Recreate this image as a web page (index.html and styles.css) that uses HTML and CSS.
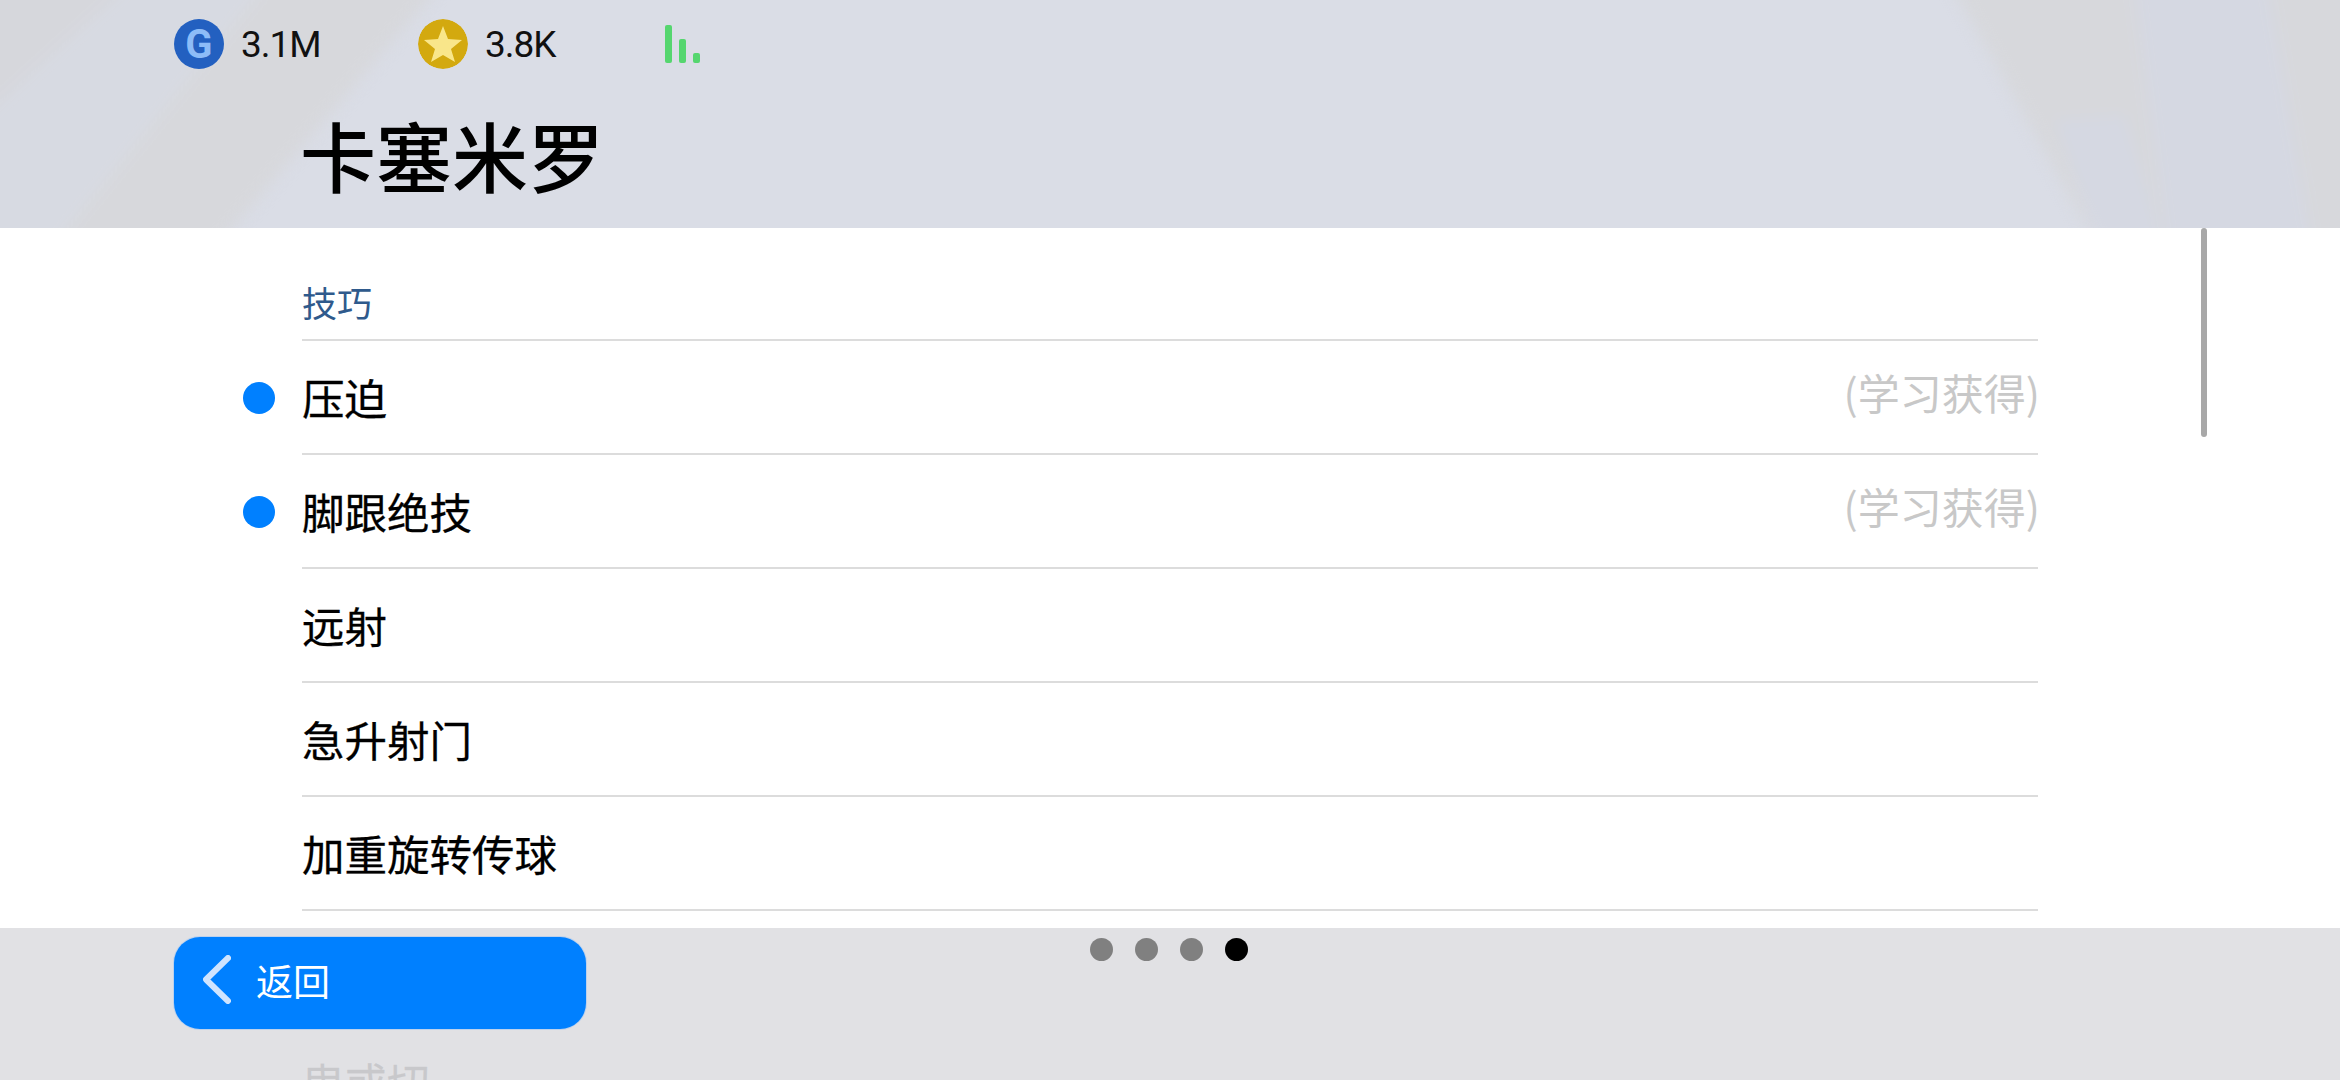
FILE: index.html
```html
<!DOCTYPE html>
<html lang="zh-CN">
<head>
    <meta charset="UTF-8">
    <meta name="viewport" content="width=device-width, initial-scale=1.0">
    <title>卡塞米罗</title>
    <link rel="stylesheet" href="styles.css">
</head>
<body>
    <div class="screen">
        <!-- Header -->
        <header class="header">
            <svg class="header-bg" viewBox="0 0 2340 228" preserveAspectRatio="none" aria-hidden="true">
                <g class="bg-blur">
                    <polygon class="bg-corner" points="-20,-20 135,-20 -20,120"/>
                    <polygon class="bg-soft" points="135,-20 270,-20 50,250 -20,250 -20,120"/>
                    <polygon class="bg-grey" points="270,-20 445,-20 214,250 50,250"/>
                    <polygon class="bg-grey" points="1948,-20 2133,-20 2167,250 2100,250"/>
                    <polygon class="bg-blue" points="2055,120 2125,115 2165,250 2100,250"/>
                    <polygon class="bg-blue" points="2133,-20 2267,-20 2313,250 2167,250"/>
                    <polygon class="bg-grey" points="2267,-20 2360,-20 2360,250 2313,250"/>
                </g>
            </svg>
            <div class="status-bar">
                <div class="stat">
                    <span class="coin coin-g">G</span>
                    <span class="stat-value">3.1M</span>
                </div>
                <div class="stat">
                    <svg class="coin" viewBox="0 0 50 50" aria-hidden="true">
                        <circle cx="25" cy="25" r="25" fill="#d3a90f"/>
                        <polygon points="25,7 30,20 44,21 33,30 37,43 25,36 13,43 17,30 6,21 20,20" fill="#f9e68a"/>
                    </svg>
                    <span class="stat-value">3.8K</span>
                </div>
                <div class="signal">
                    <span class="signal-bar signal-high"></span>
                    <span class="signal-bar signal-mid"></span>
                    <span class="signal-bar signal-low"></span>
                </div>
            </div>
            <h1 class="player-name">卡塞米罗</h1>
        </header>

        <!-- Skill list -->
        <main class="skills">
            <div class="scroll-thumb"></div>
            <h2 class="skills-title">技巧</h2>
            <div class="skill-row">
                <span class="skill-dot"></span>
                <span class="skill-name">压迫</span>
                <span class="skill-note">(学习获得)</span>
            </div>
            <div class="skill-row">
                <span class="skill-dot"></span>
                <span class="skill-name">脚跟绝技</span>
                <span class="skill-note">(学习获得)</span>
            </div>
            <div class="skill-row"><span class="skill-name">远射</span></div>
            <div class="skill-row"><span class="skill-name">急升射门</span></div>
            <div class="skill-row"><span class="skill-name">加重旋转传球</span></div>
            <div class="skill-row skill-row-hidden"></div>
            <div class="skill-row"><span class="skill-name">曳或切</span></div>
        </main>

        <!-- Footer -->
        <footer class="footer">
            <button class="back-button">
                <svg class="back-icon" viewBox="0 0 28 49" aria-hidden="true">
                    <polyline points="25,3 3,24.5 25,46"/>
                </svg>
                返回
            </button>
            <div class="pager">
                <span class="pager-dot"></span>
                <span class="pager-dot"></span>
                <span class="pager-dot"></span>
                <span class="pager-dot active"></span>
            </div>
        </footer>
    </div>
</body>
</html>
```

FILE: styles.css
```css
:root {
    --bg-header: #dadde6;
    --bg-footer: rgba(222, 222, 225, 0.9);
    --text-primary: #000000;
    --text-muted: #c8c8c8;
    --text-title: #2f5a8c;
    --accent: #0080ff;
    --line: #dcdcdc;
    --font-primary: 'Noto Sans CJK SC', sans-serif;
    --font-latin: 'Roboto', 'Noto Sans CJK SC', sans-serif;
}

html,
body {
    margin: 0;
    padding: 0;
}

body {
    font-family: var(--font-primary);
    color: var(--text-primary);
    background-color: #ffffff;
}

.screen {
    position: relative;
    width: 2340px;
    height: 1080px;
    overflow: hidden;
    display: flex;
    flex-direction: column;
}

/* Header */
.header {
    position: relative;
    flex: none;
    height: 228px;
    background-color: var(--bg-header);
    overflow: hidden;
}

.header-bg {
    position: absolute;
    top: 0;
    left: 0;
    width: 100%;
    height: 100%;
}

.bg-blur {
    filter: blur(7px);
}

.bg-corner {
    fill: #d6d7dc;
}

.bg-grey {
    fill: #d7d8dc;
}

.bg-soft {
    fill: #d7dae2;
}

.bg-blue {
    fill: #d5d8e2;
}

.status-bar {
    position: relative;
    display: flex;
    align-items: center;
    height: 88px;
    padding-left: 174px;
}

.stat {
    display: flex;
    align-items: center;
    gap: 17px;
    width: 244px;
    flex: none;
}

.stat + .stat {
    width: 247px;
}

.coin {
    flex: none;
    width: 50px;
    height: 50px;
    border-radius: 50%;
}

.coin-g {
    display: flex;
    align-items: center;
    justify-content: center;
    background-color: #2360c0;
    color: #8dbcf7;
    font-family: var(--font-latin);
    font-size: 40px;
    font-weight: 700;
}

.stat-value {
    font-family: var(--font-latin);
    font-size: 37px;
    letter-spacing: -1px;
    color: #111111;
}

.signal {
    display: flex;
    align-items: flex-end;
    gap: 7px;
    height: 38px;
}

.signal-bar {
    width: 7px;
    background-color: #55d66f;
    border-radius: 2px;
}

.signal-high {
    height: 38px;
}

.signal-mid {
    height: 24px;
}

.signal-low {
    height: 10px;
}

.player-name {
    position: relative;
    margin: 0;
    padding-left: 300px;
    font-size: 76px;
    font-weight: 500;
    line-height: 132px;
}

/* Skill list */
.skills {
    position: relative;
    flex: 1;
    background-color: #ffffff;
    padding: 0 302px;
}

.scroll-thumb {
    position: absolute;
    top: 0;
    left: 2201px;
    width: 6px;
    height: 209px;
    border-radius: 3px;
    background-color: #a8a8a8;
}

.skills-title {
    display: flex;
    align-items: flex-end;
    box-sizing: border-box;
    height: 113px;
    margin: 0;
    padding-bottom: 12px;
    border-bottom: 2px solid var(--line);
    font-size: 35px;
    font-weight: 400;
    line-height: 50px;
    color: var(--text-title);
}

.skill-row {
    display: flex;
    align-items: center;
    box-sizing: border-box;
    height: 114px;
    border-bottom: 2px solid var(--line);
}

.skill-row-hidden {
    border-bottom-color: transparent;
}

.skill-dot {
    flex: none;
    width: 32px;
    height: 32px;
    margin-top: 2px;
    margin-left: -59px;
    margin-right: 27px;
    border-radius: 50%;
    background-color: var(--accent);
}

.skill-name {
    font-size: 42.5px;
    line-height: 60px;
    -webkit-text-stroke: 0.3px #000000;
}

.skill-note {
    margin-left: auto;
    margin-right: -2px;
    margin-bottom: 10px;
    font-size: 42px;
    line-height: 60px;
    color: var(--text-muted);
}

/* Footer */
.footer {
    position: absolute;
    left: 0;
    right: 0;
    bottom: 0;
    display: grid;
    grid-template-columns: 1fr auto 1fr;
    align-items: start;
    box-sizing: border-box;
    height: 152px;
    padding-top: 9px;
    background-color: var(--bg-footer);
}

.back-button {
    display: flex;
    align-items: center;
    gap: 25px;
    box-sizing: border-box;
    width: 412px;
    height: 92px;
    margin-left: 174px;
    padding: 0 0 7px 29px;
    border: none;
    border-radius: 26px;
    background-color: var(--accent);
    box-shadow: 0 0 0 1px rgba(120, 180, 255, 0.35);
    color: #ffffff;
    font-family: var(--font-primary);
    font-size: 37px;
}

.back-icon {
    flex: none;
    width: 28px;
    height: 49px;
    fill: none;
    stroke: #cfe4ff;
    stroke-width: 6;
    stroke-linecap: round;
    stroke-linejoin: round;
}

.pager {
    display: flex;
    gap: 22.3px;
    margin-top: 1px;
    margin-left: -2px;
}

.pager-dot {
    width: 23px;
    height: 23px;
    border-radius: 50%;
    background-color: #808080;
}

.pager-dot.active {
    background-color: #000000;
}
```
